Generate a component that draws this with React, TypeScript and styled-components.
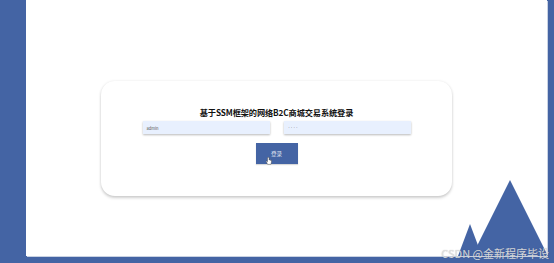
import styled, { createGlobalStyle } from 'styled-components'

const Global = createGlobalStyle`
	html, body {
		margin: 0;
		padding: 0;
		background: #4464a4;
	}
	#root {
		width: 554px;
		height: 263px;
	}
`

const Frame = styled.div`
	position: relative;
	box-sizing: border-box;
	width: 554px;
	height: 263px;
	padding: 0 7px 7px 26px;
	display: flex;
	background: #4464a4;
	overflow: hidden;
`

const Panel = styled.main`
	flex: 1;
	background: #fff;
	box-shadow: 1px 1px 0 #c9d2e3;
	padding: 81px 0 0 75px;
`

const Card = styled.section`
	box-sizing: border-box;
	width: 351px;
	height: 115px;
	border-radius: 14px;
	background: #fff;
	box-shadow:
		0 0 3px rgba(0, 0, 0, 0.08),
		0 2px 3px rgba(0, 0, 0, 0.18);
	padding-top: 26px;
	display: flex;
	flex-direction: column;
	align-items: center;
	font-family: 'Noto Sans CJK SC', 'Noto Sans', sans-serif;
`

const Title = styled.h1`
	margin: 0 0 4px;
	font-size: 8.2px;
	line-height: 10px;
	font-weight: 700;
	color: #111;
	letter-spacing: -0.1px;
`

const Fields = styled.div`
	display: flex;
	gap: 14px;
	margin-bottom: 9px;
`

const Field = styled.div<{ $secret?: boolean }>`
	box-sizing: border-box;
	width: 127px;
	height: 13px;
	background: #e8f0fe;
	box-shadow: 0 1px 2px rgba(0, 0, 0, 0.28);
	padding-left: 4px;
	display: flex;
	align-items: center;
	font-size: ${(p) => (p.$secret ? '3px' : '4px')};
	letter-spacing: ${(p) => (p.$secret ? '-0.4px' : '0')};
	color: #555;
`

const Button = styled.button`
	position: relative;
	width: 42px;
	height: 21px;
	border: none;
	padding: 0;
	background: #4464a4;
	color: #e8ecf5;
	font-family: inherit;
	font-size: 5.5px;
	box-shadow: 0 1px 1px rgba(0, 0, 0, 0.15);
`

const Pointer = styled.svg`
	position: absolute;
	left: 10px;
	top: 14px;
`

const Mountains = styled.svg`
	position: absolute;
	right: 0;
	bottom: 7px;
`

const Watermark = styled.span`
	position: absolute;
	right: 5px;
	bottom: 3px;
	font-family: 'Noto Sans CJK SC', 'Liberation Sans', sans-serif;
	font-size: 11px;
	line-height: 14px;
	color: rgba(225, 225, 225, 0.92);
	text-shadow: 0 0 1px rgba(90, 90, 90, 0.35);
`

export default function App() {
	return (
		<>
			<Global />
			<Frame>
				<Panel>
					<Card>
						<Title>基于SSM框架的网络B2C商城交易系统登录</Title>
						<Fields>
							<Field>admin</Field>
							<Field $secret>••••</Field>
						</Fields>
						<Button>
							登录
							<Pointer width="6" height="8" viewBox="0 0 6 8">
								<path
									d="M1.5 0.6v4.2l-0.8-0.7c-0.4-0.3-0.8 0.1-0.5 0.5L1.6 7.4h3.3L5.5 5V3.6c0-0.5-0.8-0.5-0.8 0V3.2c0-0.5-0.8-0.5-0.8 0V3c0-0.5-0.8-0.5-0.8 0V0.6c0-0.5-0.8-0.5-0.8 0z"
									fill="#fff"
									stroke="#333"
									strokeWidth="0.4"
								/>
							</Pointer>
						</Button>
					</Card>
				</Panel>
				<Mountains width="100" height="80" viewBox="454 176 100 80">
					<polygon points="510,180 548,256 472,256" fill="#4464a4" />
					<polygon points="470,224 482,256 458,256" fill="#4464a4" />
				</Mountains>
				<Watermark>CSDN @金新程序毕设</Watermark>
			</Frame>
		</>
	)
}
